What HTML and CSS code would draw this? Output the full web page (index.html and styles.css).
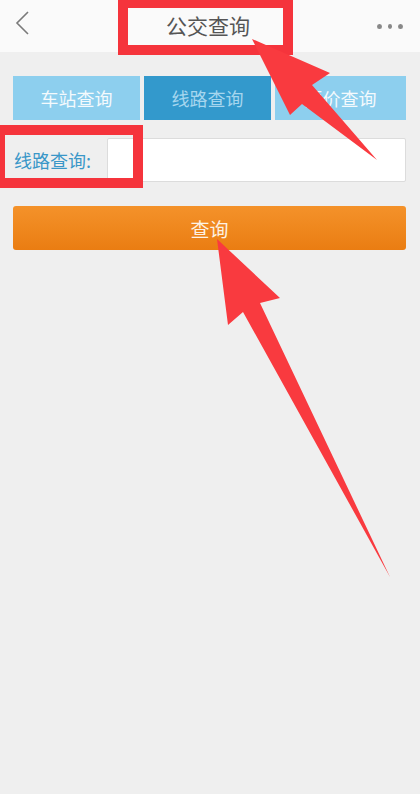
FILE: index.html
```html
<!DOCTYPE html>
<html lang="zh-CN">
<head>
<meta charset="utf-8">
<title>公交查询</title>
<link rel="stylesheet" href="styles.css">
</head>
<body>
<div class="page">
  <header class="topbar">
    <svg class="back" width="20" height="30" viewBox="0 0 20 30"><polyline points="13,1 2,12 13,23" fill="none" stroke="#7a7a7a" stroke-width="1.6"/></svg>
    <h1 class="title">公交查询</h1>
    <div class="more"><span></span><span></span><span></span></div>
  </header>
  <main class="content">
    <nav class="tabs">
      <div class="tab">车站查询</div>
      <div class="tab active">线路查询</div>
      <div class="tab">票价查询</div>
    </nav>
    <div class="field">
      <label class="label">线路查询:</label>
      <div class="input"></div>
    </div>
    <button class="submit">查询</button>
  </main>
  <div class="mark mark-title"></div>
  <div class="mark mark-label"></div>
  <svg class="arrows" width="420" height="794" viewBox="0 0 420 794">
    <polygon points="252,39 330,73 312,85 377,160 302,104 290,115" fill="#f93a3f"/>
    <polygon points="217,239 280,298 260,303 390,577 243,312 228,325" fill="#f93a3f"/>
  </svg>
</div>
</body>
</html>
```
FILE: styles.css
```css
html, body {
  margin: 0;
  padding: 0;
}
body {
  background: #efefef;
  font-family: "Noto Sans CJK SC", "Noto Sans", sans-serif;
}
.page {
  position: relative;
  width: 420px;
  height: 794px;
  overflow: hidden;
}
.topbar {
  height: 52px;
  background: #fafafa;
  display: flex;
  align-items: center;
  justify-content: space-between;
  padding: 0 17px 0 15px;
  box-sizing: border-box;
}
.back {
  display: block;
}
.title {
  margin: 0;
  font-size: 21px;
  font-weight: normal;
  color: #555;
  position: relative;
  left: 2px;
  top: -1px;
}
.more {
  display: flex;
  gap: 6px;
  width: 26px;
}
.more span {
  width: 5px;
  height: 5px;
  border-radius: 50%;
  background: #888;
}
.content {
  padding: 24px 14px 0 13px;
  display: flex;
  flex-direction: column;
}
.tabs {
  display: grid;
  grid-template-columns: 127px 127px 1fr;
  gap: 4px;
}
.tab {
  height: 44px;
  background: #8dcfee;
  color: #f4fafd;
  font-size: 18px;
  display: flex;
  align-items: center;
  justify-content: center;
}
.tab.active {
  background: #3399cc;
  color: #a6d6ee;
}
.field {
  margin-top: 18px;
  display: flex;
  align-items: center;
  height: 44px;
}
.label {
  width: 94px;
  font-size: 18px;
  color: #3a97c8;
  padding-left: 1px;
  box-sizing: border-box;
}
.input {
  flex: 1;
  height: 44px;
  box-sizing: border-box;
  background: #fff;
  border: 1px solid #dcdcdc;
  border-radius: 2px;
}
.submit {
  margin-top: 24px;
  height: 44px;
  border: none;
  border-radius: 3px;
  background: linear-gradient(#f4922a, #ea7d12);
  color: #fdf2e4;
  font-family: "Noto Sans CJK SC", "Noto Sans", sans-serif;
  font-size: 19px;
  padding: 0;
}
.mark {
  position: absolute;
  border: 10px solid #f5343c;
  box-sizing: border-box;
}
.mark-title {
  left: 118px;
  top: -2px;
  width: 175px;
  height: 57px;
}
.mark-label {
  left: -5px;
  top: 125px;
  width: 148px;
  height: 63px;
}
.arrows {
  position: absolute;
  left: 0;
  top: 0;
}
```
